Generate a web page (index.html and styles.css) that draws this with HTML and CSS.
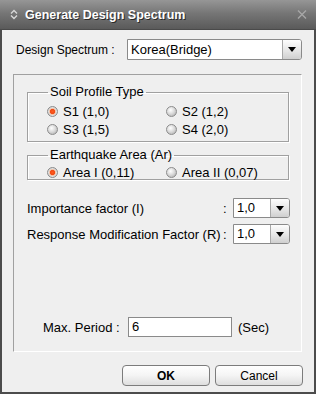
FILE: index.html
```html
<!DOCTYPE html>
<html lang="en">
<head>
    <meta charset="UTF-8">
    <title>Generate Design Spectrum</title>
    <link rel="stylesheet" href="styles.css">
</head>
<body>

<div class="window">
    <div class="titlebar">
        <svg class="title-icon" width="8" height="11" viewBox="0 0 8 11">
            <path d="M1 4.5 L4 1.5 L7 4.5 M1 6.5 L4 9.5 L7 6.5" fill="none" stroke="#d8d8d8" stroke-width="1.4"/>
        </svg>
        <span class="title">Generate Design Spectrum</span>
        <svg class="close-icon" width="10" height="9" viewBox="0 0 10 9">
            <path d="M1 0.5 L9 8.5 M9 0.5 L1 8.5" stroke="#a8a8a8" stroke-width="1.3"/>
        </svg>
    </div>

    <div class="dialog">
        <div class="spectrum-row">
            <span class="spectrum-label">Design Spectrum :</span>
            <div class="combo combo-wide">
                <span class="combo-value">Korea(Bridge)</span>
                <span class="combo-btn"><span class="arrow"></span></span>
            </div>
        </div>

        <div class="panel">
            <fieldset class="group group-soil">
                <legend>Soil Profile Type</legend>
                <div class="radio-grid">
                    <label class="radio"><span class="dot checked"></span>S1 (1,0)</label>
                    <label class="radio"><span class="dot"></span>S2 (1,2)</label>
                    <label class="radio"><span class="dot"></span>S3 (1,5)</label>
                    <label class="radio"><span class="dot"></span>S4 (2,0)</label>
                </div>
            </fieldset>

            <fieldset class="group group-area">
                <legend>Earthquake Area (Ar)</legend>
                <div class="radio-grid">
                    <label class="radio"><span class="dot checked"></span>Area I (0,11)</label>
                    <label class="radio"><span class="dot"></span>Area II (0,07)</label>
                </div>
            </fieldset>

            <div class="factor-row first">
                <span class="factor-label">Importance factor (I)</span>
                <span class="colon">:</span>
                <div class="combo combo-small">
                    <span class="combo-value">1,0</span>
                    <span class="combo-btn"><span class="arrow"></span></span>
                </div>
            </div>
            <div class="factor-row">
                <span class="factor-label">Response Modification Factor (R)</span>
                <span class="colon">:</span>
                <div class="combo combo-small">
                    <span class="combo-value">1,0</span>
                    <span class="combo-btn"><span class="arrow"></span></span>
                </div>
            </div>

            <div class="period-row">
                <span class="period-label">Max. Period :</span>
                <div class="text-input">6</div>
                <span class="unit">(Sec)</span>
            </div>
        </div>

        <div class="buttons">
            <button class="btn btn-ok">OK</button>
            <button class="btn">Cancel</button>
        </div>
    </div>
</div>

</body>
</html>
```

FILE: styles.css
```css
body {
    margin: 0;
    font-family: 'Liberation Sans', Arial, sans-serif;
    font-size: 12px;
    color: #000;
    background-color: #f0f0f0;
}
.window {
    width: 316px;
    height: 394px;
    display: flex;
    flex-direction: column;
}
.titlebar {
    height: 30px;
    flex: none;
    display: flex;
    align-items: center;
    padding: 0 9px 0 10px;
    background: linear-gradient(#969696, #767676 45%, #5a5a5a);
    border-bottom: 1px solid #4a4a4a;
    box-sizing: border-box;
}
.title-icon {
    margin-right: 7px;
}
.title {
    flex: 1;
    color: #fff;
    font-weight: bold;
    font-size: 12.5px;
    text-shadow: 1px 1px 0 #2a2a2a;
}
.dialog {
    flex: 1;
    display: flex;
    flex-direction: column;
    background-color: #efefef;
    border: 2px solid #4c4c4c;
    border-top: none;
    padding-top: 9px;
}
.spectrum-row {
    display: flex;
    align-items: center;
    padding-left: 14px;
}
.spectrum-label {
    width: 111px;
}
.combo {
    display: flex;
    height: 21px;
    box-sizing: border-box;
    border: 1px solid #8a8a8a;
    border-radius: 0 3px 3px 0;
    background-color: #fff;
}
.combo-wide {
    width: 175px;
}
.combo-small {
    width: 57px;
    height: 20px;
}
.combo-value {
    flex: 1;
    padding-left: 3px;
    line-height: 19px;
    font-size: 13px;
}
.combo-small .combo-value {
    line-height: 18px;
}
.combo-btn {
    width: 18px;
    display: flex;
    align-items: center;
    justify-content: center;
    border-left: 1px solid #a8a8a8;
    border-radius: 0 2px 2px 0;
    background: linear-gradient(#fdfdfd, #e4e4e4 60%, #cfcfcf);
}
.arrow {
    width: 0;
    height: 0;
    border-left: 4px solid transparent;
    border-right: 4px solid transparent;
    border-top: 5px solid #000;
}
.panel {
    flex: 1;
    display: flex;
    flex-direction: column;
    margin: 14px 12px 0 11px;
    border: 1px solid;
    border-color: #a0a0a0 #fff #fff #a0a0a0;
}
.group {
    margin: 10px 12px 0 13px;
    padding: 3px 0 3px 19px;
    border: 1px solid #a0a0a0;
    box-shadow: inset 1px 1px 0 #fff, 1px 1px 0 #fff;
}
.group legend {
    padding: 0 2px;
    margin-left: 1px;
    line-height: 14px;
    font-size: 13px;
}
.group-area {
    margin-top: 6px;
    padding-bottom: 0;
}
.radio-grid {
    display: grid;
    grid-template-columns: 119px 1fr;
    grid-auto-rows: 18px;
}
.group-area .radio-grid {
    grid-auto-rows: 14px;
}
.radio {
    display: flex;
    align-items: center;
    font-size: 13px;
}
.dot {
    width: 11px;
    height: 11px;
    box-sizing: border-box;
    margin-right: 5px;
    border-radius: 50%;
    border: 1px solid #8c8c8c;
    background: radial-gradient(circle at 40% 35%, #ffffff, #dcdcdc 45%, #a6a6a6 100%);
}
.dot.checked {
    background: radial-gradient(circle at 50% 50%, #ff5a1e 0, #f04a14 2.2px, #f2c2a8 3px, #e0e0e0 4px, #a6a6a6 100%);
}
.factor-row {
    display: flex;
    align-items: center;
    margin: 6px 11px 0 13px;
    font-size: 13px;
}
.factor-row.first {
    margin-top: 18px;
}
.factor-label {
    flex: 1;
}
.colon {
    width: 10px;
}
.period-row {
    margin-top: auto;
    margin-bottom: 14px;
    display: flex;
    align-items: center;
    padding-left: 29px;
    font-size: 13px;
}
.period-label {
    width: 85px;
}
.text-input {
    width: 104px;
    height: 20px;
    box-sizing: border-box;
    border: 1px solid #8a8a8a;
    background-color: #fff;
    padding-left: 3px;
    line-height: 17px;
    margin-right: 6px;
}
.buttons {
    display: flex;
    justify-content: flex-end;
    gap: 5px;
    margin: 13px 11px 6px 0;
}
.btn {
    width: 88px;
    height: 21px;
    padding: 0;
    font-family: inherit;
    font-size: 12px;
    color: #000;
    border: 1px solid #7c7c7c;
    border-radius: 4px;
    background: linear-gradient(#ffffff, #f4f4f4 50%, #dedede);
}
.btn-ok {
    font-weight: bold;
}
```
